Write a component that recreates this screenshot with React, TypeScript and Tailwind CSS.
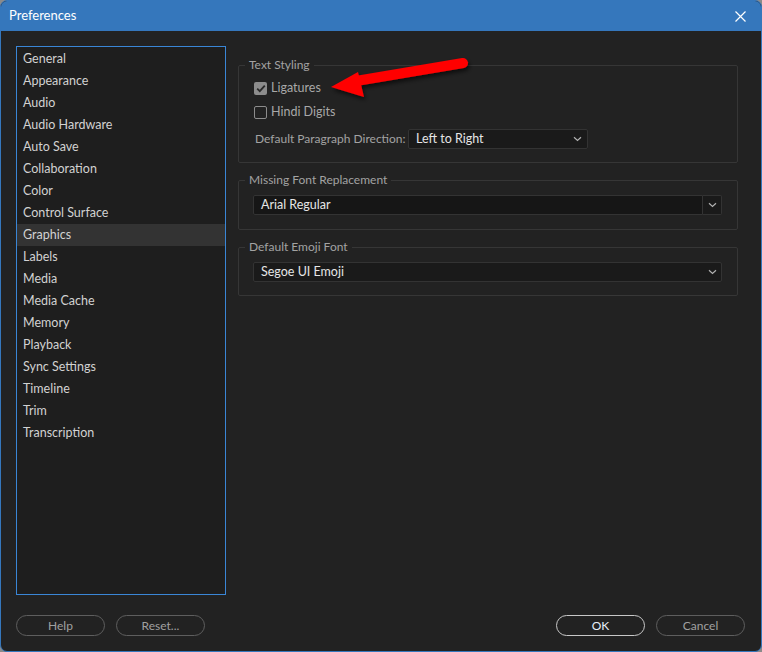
import React from "react";

const items = [
  "General","Appearance","Audio","Audio Hardware","Auto Save","Collaboration","Color","Control Surface","Graphics","Labels","Media","Media Cache","Memory","Playback","Sync Settings","Timeline","Trim","Transcription",
];

function Chevron() {
  return (
    <svg width="9" height="6" viewBox="0 0 9 6" className="shrink-0">
      <path d="M1 1.2 L4.5 4.5 L8 1.2" fill="none" stroke="#b0b0b0" strokeWidth="1.2" />
    </svg>
  );
}

function Legend({ children }: { children: React.ReactNode }) {
  return <legend className="ml-[6px] px-[4px] text-[12px] leading-[14px] text-[#a3a3a3]">{children}</legend>;
}

export default function App() {
  return (
    <div className="w-[762px] h-[652px] bg-[#8a8a8a] relative" style={{ fontFamily: "Lato, 'Noto Sans', sans-serif" }}>
      <div className="w-full h-full flex flex-col rounded-[7px] overflow-hidden border border-[#3577bc] bg-[#222222]">
        <div className="h-[30px] bg-[#3577bc] flex items-center justify-between pl-[8px] pr-[15px] shrink-0">
          <span className="text-[13px] text-white">Preferences</span>
          <svg width="11" height="11" viewBox="0 0 11 11">
            <path d="M0.5 0.5 L10.5 10.5 M10.5 0.5 L0.5 10.5" stroke="#ffffff" strokeWidth="1.2" />
          </svg>
        </div>
        <div className="flex-1 flex flex-col px-[15px] pt-[15px] pb-[15px]">
          <div className="flex gap-[12px] h-[549px]">
            <div className="w-[210px] h-full border border-[#3a86d6] bg-[#1e1e1e] flex flex-col pt-[1px]">
              {items.map((it) => (
                <div
                  key={it}
                  className={`h-[22px] flex items-center px-[6px] text-[12.5px] text-[#d2d2d2] ${it === "Graphics" ? "bg-[#333333]" : ""}`}
                >
                  {it}
                </div>
              ))}
            </div>
            <div className="w-[500px] flex flex-col gap-[10px] pt-[12px]">
              <fieldset className="border border-[#363636] rounded-[2px] px-0 pb-[13px]">
                <Legend>Text Styling</Legend>
                <div className="pl-[15px]">
                  <div className="flex items-center gap-[4px] h-[16px] mt-[8px]">
                    <div className="w-[13px] h-[13px] rounded-[2px] bg-[#8c8c8c] flex items-center justify-center">
                      <svg width="10" height="9" viewBox="0 0 10 9">
                        <path d="M1.2 4.6 L3.8 7.2 L8.8 1.6" fill="none" stroke="#2a2a2a" strokeWidth="1.8" />
                      </svg>
                    </div>
                    <span className="text-[12.5px] text-[#a8a8a8]">Ligatures</span>
                  </div>
                  <div className="flex items-center gap-[4px] h-[16px] mt-[8px]">
                    <div className="w-[13px] h-[13px] rounded-[2px] border-[1.5px] border-[#8c8c8c]" />
                    <span className="text-[12.5px] text-[#a8a8a8]">Hindi Digits</span>
                  </div>
                  <div className="flex items-center mt-[9px] ml-[1px]">
                    <span className="w-[153px] whitespace-nowrap text-[12px] text-[#a3a3a3]">Default Paragraph Direction:</span>
                    <div className="w-[180px] h-[20px] rounded-[2px] border border-[#333333] bg-[#1a1a1a] flex items-center justify-between pl-[7px] pr-[5px]">
                      <span className="text-[12.5px] text-[#e6e6e6]">Left to Right</span>
                      <Chevron />
                    </div>
                  </div>
                </div>
              </fieldset>
              <fieldset className="border border-[#363636] rounded-[2px] px-0 pb-[14px]">
                <Legend>Missing Font Replacement</Legend>
                <div className="flex h-[20px] mt-[8px] ml-[14px] mr-[15px]">
                  <div className="flex-1 h-full border border-[#333333] bg-[#161616] rounded-l-[2px] flex items-center pl-[7px]">
                    <span className="text-[12.5px] text-[#e6e6e6]">Arial Regular</span>
                  </div>
                  <div className="w-[19px] h-full border border-l-0 border-[#333333] bg-[#1a1a1a] rounded-r-[2px] flex items-center justify-center">
                    <Chevron />
                  </div>
                </div>
              </fieldset>
              <fieldset className="border border-[#363636] rounded-[2px] px-0 pb-[13px]">
                <Legend>Default Emoji Font</Legend>
                <div className="h-[20px] mt-[8px] ml-[14px] mr-[15px] border border-[#333333] bg-[#1a1a1a] rounded-[2px] flex items-center justify-between pl-[7px] pr-[4px]">
                  <span className="text-[12.5px] text-[#e6e6e6]">Segoe UI Emoji</span>
                  <Chevron />
                </div>
              </fieldset>
            </div>
          </div>
          <div className="flex items-center mt-[20px]">
            <button className="w-[89px] h-[21px] rounded-full border border-[#5e5e5e] text-[12px] text-[#a0a0a0]">Help</button>
            <button className="ml-[11px] w-[89px] h-[21px] rounded-full border border-[#5e5e5e] text-[12px] text-[#a0a0a0]">Reset...</button>
            <button className="ml-auto w-[89px] h-[21px] rounded-full border border-[#c8c8c8] text-[12px] text-[#e6eef8]">OK</button>
            <button className="ml-[11px] mr-[1px] w-[89px] h-[21px] rounded-full border border-[#5e5e5e] text-[12px] text-[#a0a0a0]">Cancel</button>
          </div>
        </div>
      </div>
      <svg className="absolute left-0 top-0 pointer-events-none" width="762" height="652">
        <defs>
          <filter id="sh" x="-20%" y="-50%" width="140%" height="200%">
            <feDropShadow dx="1.5" dy="3" stdDeviation="2" floodColor="#000" floodOpacity="0.6" />
          </filter>
        </defs>
        <g filter="url(#sh)">
          <line x1="356" y1="81" x2="463" y2="63" stroke="#ff0000" strokeWidth="10" strokeLinecap="round" />
          <polygon points="331,87 358,72 364,97" fill="#ff0000" />
        </g>
      </svg>
    </div>
  );
}
